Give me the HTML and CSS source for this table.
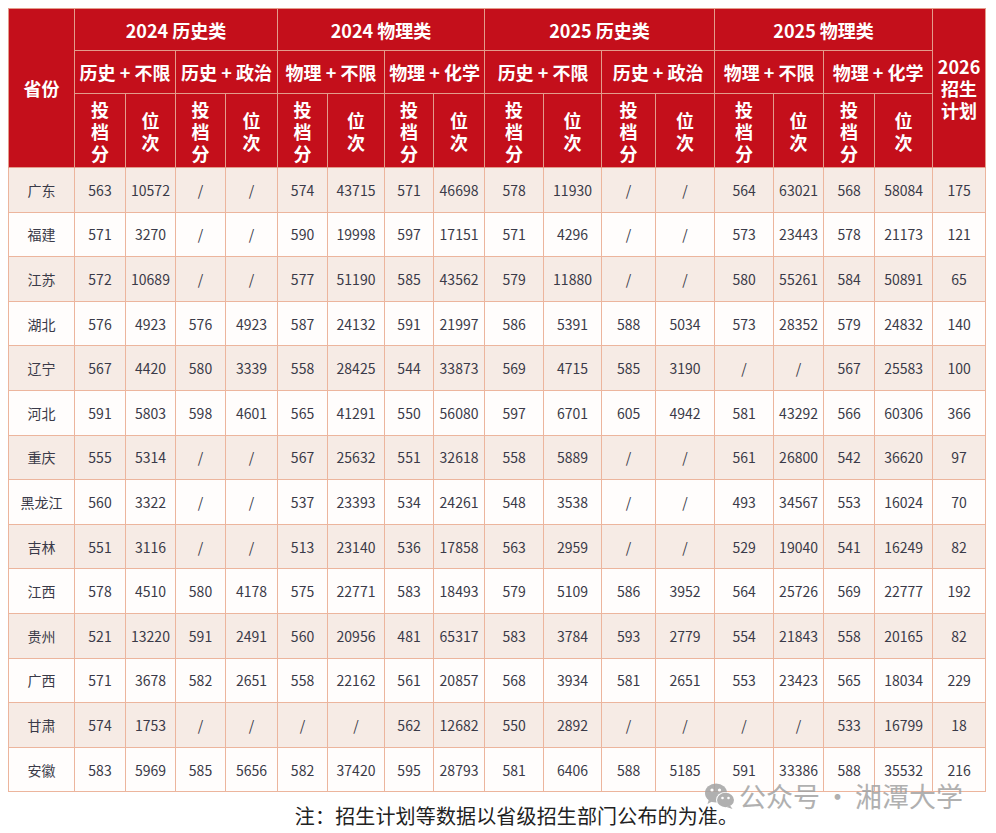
FILE: index.html
```html
<!DOCTYPE html>
<html lang="zh-CN">
<head>
<meta charset="utf-8">
<title>录取数据</title>
<link rel="stylesheet" href="styles.css">
</head>
<body>
<div class="page">
<table class="score">
<colgroup>
<col style="width:66px"><col style="width:51px"><col style="width:50px"><col style="width:50px"><col style="width:52px">
<col style="width:50px"><col style="width:57px"><col style="width:49px"><col style="width:51px">
<col style="width:59px"><col style="width:58px"><col style="width:54px"><col style="width:59px">
<col style="width:59px"><col style="width:50px"><col style="width:51px"><col style="width:58px">
<col style="width:53px">
</colgroup>
<thead>
<tr class="h1">
<th rowspan="3">省份</th>
<th colspan="4">2024 历史类</th>
<th colspan="4">2024 物理类</th>
<th colspan="4">2025 历史类</th>
<th colspan="4">2025 物理类</th>
<th rowspan="3" class="plan">2026<br>招生<br>计划</th>
</tr>
<tr class="h2">
<th colspan="2">历史 + 不限</th><th colspan="2">历史 + 政治</th>
<th colspan="2">物理 + 不限</th><th colspan="2">物理 + 化学</th>
<th colspan="2">历史 + 不限</th><th colspan="2">历史 + 政治</th>
<th colspan="2">物理 + 不限</th><th colspan="2">物理 + 化学</th>
</tr>
<tr class="h3">
<th>投<br>档<br>分</th><th>位<br>次</th><th>投<br>档<br>分</th><th>位<br>次</th>
<th>投<br>档<br>分</th><th>位<br>次</th><th>投<br>档<br>分</th><th>位<br>次</th>
<th>投<br>档<br>分</th><th>位<br>次</th><th>投<br>档<br>分</th><th>位<br>次</th>
<th>投<br>档<br>分</th><th>位<br>次</th><th>投<br>档<br>分</th><th>位<br>次</th>
</tr>
</thead>
<tbody>
<tr><td>广东</td><td>563</td><td>10572</td><td>/</td><td>/</td><td>574</td><td>43715</td><td>571</td><td>46698</td><td>578</td><td>11930</td><td>/</td><td>/</td><td>564</td><td>63021</td><td>568</td><td>58084</td><td>175</td></tr>
<tr><td>福建</td><td>571</td><td>3270</td><td>/</td><td>/</td><td>590</td><td>19998</td><td>597</td><td>17151</td><td>571</td><td>4296</td><td>/</td><td>/</td><td>573</td><td>23443</td><td>578</td><td>21173</td><td>121</td></tr>
<tr><td>江苏</td><td>572</td><td>10689</td><td>/</td><td>/</td><td>577</td><td>51190</td><td>585</td><td>43562</td><td>579</td><td>11880</td><td>/</td><td>/</td><td>580</td><td>55261</td><td>584</td><td>50891</td><td>65</td></tr>
<tr><td>湖北</td><td>576</td><td>4923</td><td>576</td><td>4923</td><td>587</td><td>24132</td><td>591</td><td>21997</td><td>586</td><td>5391</td><td>588</td><td>5034</td><td>573</td><td>28352</td><td>579</td><td>24832</td><td>140</td></tr>
<tr><td>辽宁</td><td>567</td><td>4420</td><td>580</td><td>3339</td><td>558</td><td>28425</td><td>544</td><td>33873</td><td>569</td><td>4715</td><td>585</td><td>3190</td><td>/</td><td>/</td><td>567</td><td>25583</td><td>100</td></tr>
<tr><td>河北</td><td>591</td><td>5803</td><td>598</td><td>4601</td><td>565</td><td>41291</td><td>550</td><td>56080</td><td>597</td><td>6701</td><td>605</td><td>4942</td><td>581</td><td>43292</td><td>566</td><td>60306</td><td>366</td></tr>
<tr><td>重庆</td><td>555</td><td>5314</td><td>/</td><td>/</td><td>567</td><td>25632</td><td>551</td><td>32618</td><td>558</td><td>5889</td><td>/</td><td>/</td><td>561</td><td>26800</td><td>542</td><td>36620</td><td>97</td></tr>
<tr><td>黑龙江</td><td>560</td><td>3322</td><td>/</td><td>/</td><td>537</td><td>23393</td><td>534</td><td>24261</td><td>548</td><td>3538</td><td>/</td><td>/</td><td>493</td><td>34567</td><td>553</td><td>16024</td><td>70</td></tr>
<tr><td>吉林</td><td>551</td><td>3116</td><td>/</td><td>/</td><td>513</td><td>23140</td><td>536</td><td>17858</td><td>563</td><td>2959</td><td>/</td><td>/</td><td>529</td><td>19040</td><td>541</td><td>16249</td><td>82</td></tr>
<tr><td>江西</td><td>578</td><td>4510</td><td>580</td><td>4178</td><td>575</td><td>22771</td><td>583</td><td>18493</td><td>579</td><td>5109</td><td>586</td><td>3952</td><td>564</td><td>25726</td><td>569</td><td>22777</td><td>192</td></tr>
<tr><td>贵州</td><td>521</td><td>13220</td><td>591</td><td>2491</td><td>560</td><td>20956</td><td>481</td><td>65317</td><td>583</td><td>3784</td><td>593</td><td>2779</td><td>554</td><td>21843</td><td>558</td><td>20165</td><td>82</td></tr>
<tr><td>广西</td><td>571</td><td>3678</td><td>582</td><td>2651</td><td>558</td><td>22162</td><td>561</td><td>20857</td><td>568</td><td>3934</td><td>581</td><td>2651</td><td>553</td><td>23423</td><td>565</td><td>18034</td><td>229</td></tr>
<tr><td>甘肃</td><td>574</td><td>1753</td><td>/</td><td>/</td><td>/</td><td>/</td><td>562</td><td>12682</td><td>550</td><td>2892</td><td>/</td><td>/</td><td>/</td><td>/</td><td>533</td><td>16799</td><td>18</td></tr>
<tr><td>安徽</td><td>583</td><td>5969</td><td>585</td><td>5656</td><td>582</td><td>37420</td><td>595</td><td>28793</td><td>581</td><td>6406</td><td>588</td><td>5185</td><td>591</td><td>33386</td><td>588</td><td>35532</td><td>216</td></tr>
</tbody>
</table>
<p class="note">注：招生计划等数据以省级招生部门公布的为准。</p>
<div class="watermark">
<svg class="wx" viewBox="0 0 32 28" width="32" height="28">
<ellipse cx="12" cy="11" rx="11" ry="9.5" fill="#a3a3a3"/>
<path d="M5 17 L3.5 22 L9 19 Z" fill="#a3a3a3"/>
<circle cx="8" cy="8" r="1.6" fill="#fff"/>
<circle cx="15.5" cy="8" r="1.6" fill="#fff"/>
<ellipse cx="21.5" cy="18" rx="9.5" ry="8" fill="#fff"/>
<ellipse cx="21.5" cy="18" rx="8.5" ry="7.2" fill="#a3a3a3"/>
<path d="M26 23.5 L28.5 27 L22.5 25 Z" fill="#a3a3a3"/>
<circle cx="18.5" cy="16" r="1.3" fill="#fff"/>
<circle cx="24.5" cy="16" r="1.3" fill="#fff"/>
</svg>
<span class="wm-text">公众号</span>
<span class="wm-dot">·</span>
<span class="wm-text">湘潭大学</span>
</div>
</div>
</body>
</html>
```

FILE: styles.css
```css
html, body {
  margin: 0;
  padding: 0;
  background: #ffffff;
}
body {
  font-family: "Noto Sans CJK SC", "Noto Sans", sans-serif;
}
.page {
  position: relative;
  padding: 8px 0 0 8px;
  width: 988px;
  height: 825px;
}
.score {
  border-collapse: collapse;
  table-layout: fixed;
  width: 977px;
  border: 1px solid #f0c3ae;
}
.score th {
  background: #c40f1b;
  color: #ffffff;
  font-weight: 700;
  font-size: 18px;
  line-height: 22px;
  text-align: center;
  vertical-align: middle;
  border: 1px solid #e39c8c;
  padding: 0;
}
.score tr.h1 { height: 42px; }
.score tr.h2 { height: 43px; }
.score tr.h3 { height: 74px; }
.score td {
  font-size: 14px;
  color: #3a3a48;
  text-align: center;
  vertical-align: middle;
  border: 1px solid #ecb59d;
  height: 43.6px;
  padding: 0;
}
.score tbody tr:nth-child(odd) td { background: #f6ebe5; }
.score tbody tr:nth-child(even) td { background: #fffdfc; }
.note {
  margin: 11px 0 0 0;
  padding-left: 20px;
  text-align: center;
  font-size: 20px;
  line-height: 26px;
  color: #222222;
  width: 977px;
  letter-spacing: 0.15px;
}
.watermark {
  position: absolute;
  left: 704px;
  top: 779px;
  display: flex;
  align-items: center;
  opacity: 0.85;
}
.wx {
  margin-right: 3px;
}
.wm-text {
  font-size: 27px;
  line-height: 34px;
  color: #a3a3a3;
  white-space: nowrap;
}
.wm-dot {
  font-size: 27px;
  line-height: 34px;
  color: #a3a3a3;
  width: 35px;
  text-align: center;
}
```
